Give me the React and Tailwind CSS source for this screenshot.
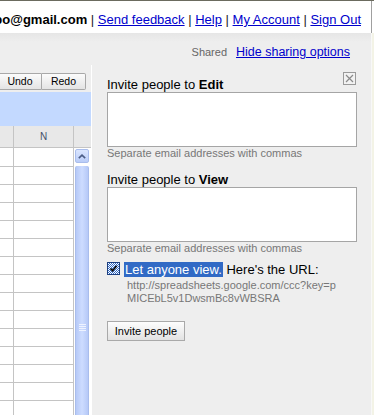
// Spreadsheet share panel — header links, sheet edge on the left, invite form on the right.
const rows = Array.from({ length: 15 }, (_, i) => i);

function ToolButton({ children, first }) {
  return (
    <button
      type="button"
      className={`h-[17px] w-[44px] shrink-0 border border-[#a8a8a8] bg-[linear-gradient(#fbfbfb,#e4e4e4)] text-[10.5px] leading-[15px] text-black ${
        first ? 'rounded-l-[2px]' : 'rounded-r-[2px] border-l-0'
      }`}
    >
      {children}
    </button>
  );
}

function SheetEdge() {
  return (
    <div className="flex w-[91px] shrink-0 flex-col">
      {/* toolbar */}
      <div className="flex h-[27px] justify-end pr-[5px] pt-[8px]">
        <ToolButton first>Undo</ToolButton>
        <ToolButton>Redo</ToolButton>
      </div>

      {/* formula / selection band */}
      <div className="h-[34px] bg-[#c3d9ff]" />

      {/* column header */}
      <div className="flex h-[22px] border-b border-[#c4c4c4] bg-[#e8e8e8]">
        <div className="w-[14px] border-r border-[#c4c4c4]" />
        <div className="flex w-[60px] items-center justify-center border-r border-[#c4c4c4] text-[10px] text-[#44506a]">
          N
        </div>
      </div>

      {/* cells + scrollbar */}
      <div className="flex flex-1 bg-white">
        <div className="w-[74px]">
          {rows.map((r) => (
            <div
              key={r}
              className={`flex border-b border-[#c4c4c4] ${r === 0 ? 'h-[19px]' : 'h-[18px]'}`}
            >
              <div className="w-[14px] border-r border-[#c4c4c4]" />
              <div className="w-[60px] border-r border-[#c4c4c4]" />
            </div>
          ))}
        </div>
        <div className="flex w-[17px] flex-col pl-px pt-px">
          <div className="flex h-[14px] w-[14px] items-center justify-center rounded-[2px] border border-[#a9bdec] bg-[linear-gradient(#dbe6ff,#b9ccf8)]">
            <svg width="8" height="5" viewBox="0 0 8 5">
              <path d="M0.8 4.2 L4 1.2 L7.2 4.2" fill="none" stroke="#4b5d86" strokeWidth="1.6" />
            </svg>
          </div>
          <div className="mt-[3px] flex w-[14px] flex-1 flex-col items-center rounded-t-[2px] border-x border-[#a9bdec] bg-[linear-gradient(90deg,#b6c9f7,#cddcff_50%,#b6c9f7)]">
            <div className="mt-[158px] flex flex-col gap-px">
              <div className="h-px w-[7px] bg-[#eef3ff]" />
              <div className="h-px w-[7px] bg-[#eef3ff]" />
              <div className="h-px w-[7px] bg-[#eef3ff]" />
              <div className="h-px w-[7px] bg-[#eef3ff]" />
            </div>
          </div>
        </div>
      </div>
    </div>
  );
}

function InviteBox({ what, gap }) {
  return (
    <div className={gap ? 'mt-[12px]' : ''}>
      <div className="text-[13px] leading-[15px] text-black">
        Invite people to <b>{what}</b>
      </div>
      <textarea className="block h-[55px] w-[250px] resize-none border border-[#a5a5a5] bg-white outline-none" />
      <div className="text-[11px] leading-[13px] text-[#777777]">
        Separate email addresses with commas
      </div>
    </div>
  );
}

function SharePanel() {
  return (
    <div className="relative flex-1 border-l border-white bg-[#eeeeee] pl-[15px] pt-[12px]">
      <button
        type="button"
        className="absolute right-[15px] top-[7px] flex h-[13px] w-[13px] items-center justify-center border border-[#9a9a9a] bg-[#f2f2f2]"
      >
        <svg width="9" height="9" viewBox="0 0 9 9">
          <path d="M1 1 L8 8 M8 1 L1 8" stroke="#8a8a8a" strokeWidth="1.2" />
        </svg>
      </button>

      <InviteBox what="Edit" />
      <InviteBox what="View" gap />

      {/* anyone can view */}
      <div className="mt-[7px] flex items-start gap-[4px]">
        <div className="flex h-[13px] w-[13px] shrink-0 items-center justify-center border border-[#1c3f80] bg-[repeating-conic-gradient(#316ac5_0%_25%,#ffffff_0%_50%)] bg-[length:2px_2px]">
          <svg width="9" height="9" viewBox="0 0 9 9">
            <path d="M1.5 4.5 L3.6 6.7 L7.6 1.8" fill="none" stroke="#000" strokeWidth="1.7" />
          </svg>
        </div>
        <div className="text-[13px] leading-[15px] text-black">
          <span className="bg-[#316ac5] px-px text-white">Let anyone view.</span> Here's the URL:
        </div>
      </div>
      <div className="mt-[2px] pl-[20px] text-[11px] leading-[13px] text-[#777777]">
        <div>http://spreadsheets.google.com/ccc?key=p</div>
        <div>MICEbL5v1DwsmBc8vWBSRA</div>
      </div>

      <button
        type="button"
        className="mt-[16px] h-[20px] w-[78px] border border-[#a9a9a9] bg-[linear-gradient(#fdfdfd,#e2e2e2)] text-[11px] leading-[18px] text-black"
      >
        Invite people
      </button>
    </div>
  );
}

export default function App() {
  return (
    <div className="flex h-[415px] w-[374px] flex-col overflow-hidden bg-[#eeeeee] font-['Liberation_Sans',Arial,sans-serif]">
      <div className="h-px shrink-0 bg-[#6b6b5f]" />
      <div className="flex flex-1">
        <div className="flex w-[371px] flex-col">
          {/* account links */}
          <div className="flex h-[32px] shrink-0 justify-end overflow-hidden whitespace-nowrap bg-white pr-[10px] pt-[11px] text-[13px] leading-[15px] text-[#222]">
            <span>
              <b className="text-black">bo@gmail.com</b> |{' '}
              <a href="#" className="text-[#0000cc] underline">Send feedback</a> |{' '}
              <a href="#" className="text-[#0000cc] underline">Help</a> |{' '}
              <a href="#" className="text-[#0000cc] underline">My Account</a> |{' '}
              <a href="#" className="text-[#0000cc] underline">Sign Out</a>
            </span>
          </div>

          {/* sharing status */}
          <div className="flex h-[32px] shrink-0 items-baseline justify-end bg-[linear-gradient(#e6e6e6,#eeeeee_9px)] pr-[21px] pt-[11px]">
            <span className="mr-[9px] text-[11px] text-[#666]">Shared</span>
            <a href="#" className="text-[12.5px] leading-[15px] text-[#0000cc] underline">
              Hide sharing options
            </a>
          </div>

          <div className="flex flex-1">
            <SheetEdge />
            <SharePanel />
          </div>
        </div>

        {/* window edge */}
        <div className="flex w-[3px] flex-col">
          <div className="h-[32px] border-l border-[#a0a0a0] bg-white" />
          <div className="flex-1 border-l border-[#f8f8f8] bg-[#f3f3e6]" />
        </div>
      </div>
    </div>
  );
}
